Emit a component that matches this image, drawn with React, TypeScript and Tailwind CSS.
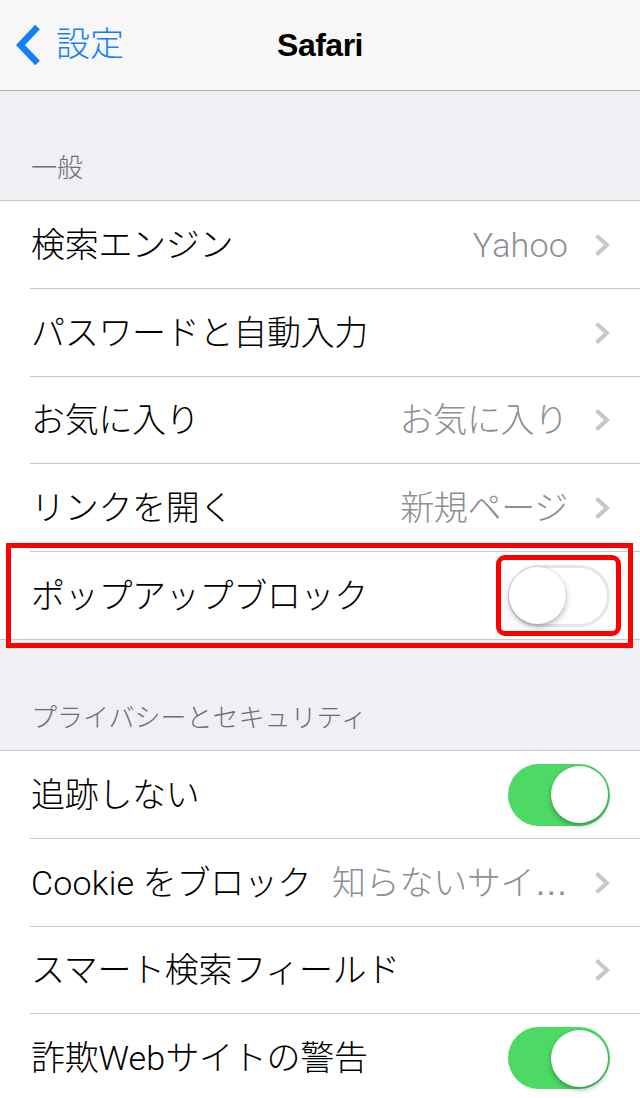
import React from "react";

const FONT = "'Liberation Sans', 'Noto Sans CJK JP', sans-serif";

function Chevron() {
  return (
    <svg width="16" height="24" viewBox="0 0 16 24" className="shrink-0">
      <polyline
        points="2.5,2.5 13,12 2.5,21.5"
        fill="none"
        stroke="#c7c7cc"
        strokeWidth="4.2"
        strokeLinejoin="miter"
      />
    </svg>
  );
}

function Toggle({ on }: { on: boolean }) {
  if (on) {
    return (
      <div className="w-[102px] h-[62px] rounded-full bg-[#4cd964] flex items-center justify-end pr-[2px] shrink-0">
        <div className="w-[57px] h-[57px] rounded-full bg-white shadow-[0_3px_5px_rgba(0,0,0,0.28),0_0_0_1px_rgba(0,0,0,0.04)]" />
      </div>
    );
  }
  return (
    <div className="w-[102px] h-[62px] rounded-full bg-white border-[3px] border-[#e6e6e6] flex items-center justify-start shrink-0">
      <div className="-ml-[2px] w-[57px] h-[57px] rounded-full bg-white shadow-[0_3px_6px_rgba(0,0,0,0.28),0_0_0_1px_rgba(0,0,0,0.05)]" />
    </div>
  );
}

function L({ children }: { children: React.ReactNode }) {
  return <span className="font-['Roboto',sans-serif] font-light tracking-[0.2px]">{children}</span>;
}

type RowProps = {
  label: React.ReactNode;
  value?: React.ReactNode;
  chevron?: boolean;
  toggle?: boolean;
  toggleOn?: boolean;
  h: string;
  last?: boolean;
  children?: React.ReactNode;
};

function Row({ label, value, chevron, toggle, toggleOn, h, last, children }: RowProps) {
  return (
    <div className={`relative ml-[30px] pr-[30px] flex items-center ${h} ${last ? "" : "border-b border-[#c8c7cc]"}`}>
      <span className="text-[34px] leading-[40px] font-light tracking-[-0.3px] text-black whitespace-nowrap shrink-0 pl-[1px]">{label}</span>
      <div className="flex-1 flex items-center justify-end">
        {value && (
          <span className="ml-[18px] text-[34px] leading-[40px] font-light tracking-[-0.3px] text-[#8e8e93] whitespace-nowrap shrink-0">{value}</span>
        )}
        {chevron && <div className="ml-[26px] flex items-center shrink-0"><Chevron /></div>}
        {toggle && <Toggle on={!!toggleOn} />}
      </div>
      {children}
    </div>
  );
}

export default function App() {
  return (
    <div className="w-[640px] h-[1098px] overflow-hidden bg-[#efeff4]" style={{ fontFamily: FONT }}>
      {/* Nav bar */}
      <div className="h-[91px] bg-[#f7f7f7] border-b border-[#b2b2b2] grid grid-cols-[1fr_auto_1fr] items-center">
        <div className="flex items-center pl-[15px] gap-[15px] text-[#157efb]">
          <svg width="26" height="42" viewBox="0 0 26 42">
            <polyline points="22.5,3 5.5,21 22.5,39" fill="none" stroke="#157efb" strokeWidth="6.5" strokeLinejoin="miter" />
          </svg>
          <span className="text-[34px] leading-[40px] font-light -mt-[2px]">設定</span>
        </div>
        <div className="text-[32px] leading-[40px] font-bold text-black tracking-[-0.5px]">Safari</div>
        <div />
      </div>

      {/* Section: 一般 */}
      <div className="h-[109px] flex items-end pb-[19px] pl-[31px]">
        <span className="text-[26px] leading-[26px] font-light text-[#6d6d72]">一般</span>
      </div>
      <div className="bg-white border-t border-b border-[#c8c7cc]">
        <Row label="検索エンジン" value={<L>Yahoo</L>} chevron h="h-[88px]" />
        <Row label="パスワードと自動入力" chevron h="h-[88px]" />
        <Row label="お気に入り" value="お気に入り" chevron h="h-[87px]" />
        <Row label="リンクを開く" value="新規ページ" chevron h="h-[88px]" />
        <Row label="ポップアップブロック" toggle h="h-[87px]" last>
          <div className="absolute left-[-24px] top-[-9px] w-[627px] h-[105px] border-[5px] border-[#ff0000] pointer-events-none" />
          <div className="absolute left-[466px] top-[3px] w-[125px] h-[81px] border-[5px] border-[#ff0000] rounded-[9px] pointer-events-none" />
        </Row>
      </div>

      {/* Section: プライバシーとセキュリティ */}
      <div className="h-[110px] flex items-end pb-[19px] pl-[31px]">
        <span className="text-[26px] leading-[26px] font-light text-[#6d6d72]">プライバシーとセキュリティ</span>
      </div>
      <div className="bg-white border-t border-b border-[#c8c7cc]">
        <Row label="追跡しない" toggle toggleOn h="h-[88px]" />
        <Row label={<><L>Cookie </L>をブロック</>} value="知らないサイ…" chevron h="h-[88px]" />
        <Row label="スマート検索フィールド" chevron h="h-[87px]" />
        <Row label={<>詐欺<L>Web</L>サイトの警告</>} toggle toggleOn h="h-[88px]" last />
      </div>
    </div>
  );
}
